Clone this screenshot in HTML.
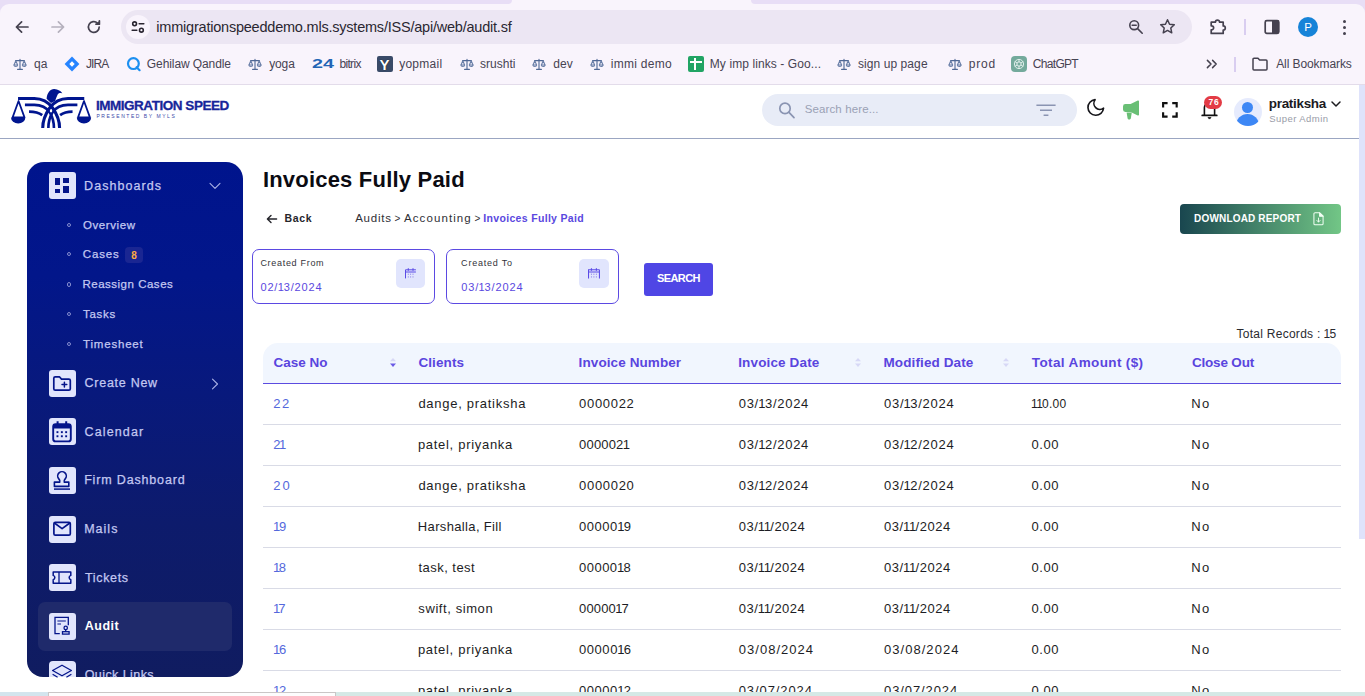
<!DOCTYPE html>
<html lang="en">
<head>
<meta charset="utf-8">
<title>Invoices Fully Paid - Immigration Speed</title>
<style>
*{box-sizing:border-box;margin:0;padding:0}
html,body{width:1365px;height:696px;overflow:hidden;background:#fff}
body{font-family:"Liberation Sans",sans-serif;position:relative}
#root{position:absolute;left:0;top:0;width:1365px;height:696px;overflow:hidden;background:#fff}
.a{position:absolute}
.t{position:absolute;white-space:pre;line-height:1;font-family:"Liberation Sans",sans-serif}
svg{position:absolute;overflow:visible}
.ib{position:absolute;left:49px;width:27px;height:27px;border-radius:3px;background:#e1e5fc}
.rowline{position:absolute;left:263px;width:1078px;height:1px;background:#d9dbe6}
.bul{position:absolute;left:66.8px;width:4.4px;height:4.4px;border:1px solid #858dcf;border-radius:50%}
</style>
</head>
<body>
<div id="root">
<!-- ============ browser chrome ============ -->
<div class="a" style="left:0;top:0;width:1365px;height:46px;background:#e8def6"></div>
<div class="a" style="left:0;top:4px;width:1365px;height:81px;background:#f9f4fc;border-radius:9px 9px 0 0"></div>
<div class="a" style="left:508px;top:0;width:247px;height:8px;background:#f9f4fc"></div>
<div class="a" style="left:500px;top:-4px;width:12px;height:8px;background:#e8def6;border-radius:0 0 4px 0"></div>
<div class="a" style="left:751px;top:-4px;width:12px;height:8px;background:#e8def6;border-radius:0 0 0 4px"></div>
<div class="a" style="left:0;top:84px;width:1365px;height:1px;background:#e3dcea"></div>
<!-- omnibox -->
<div class="a" style="left:121px;top:10px;width:1071px;height:34px;border-radius:17px;background:#ece6f3"></div>
<div class="a" style="left:126px;top:15px;width:24px;height:24px;border-radius:12px;background:#f9f4fc"></div>
<svg style="left:130px;top:19px" width="16" height="16" viewBox="0 0 16 16" fill="none" stroke="#2a2631" stroke-width="1.6" stroke-linecap="round"><circle cx="4.6" cy="4.8" r="1.9"/><path d="M9.2 4.8h4.6"/><circle cx="11.4" cy="11.2" r="1.9"/><path d="M2.2 11.2h4.6"/></svg>
<!-- nav arrows -->
<svg style="left:14px;top:19px" width="16" height="16" viewBox="0 0 16 16" fill="none" stroke="#45414f" stroke-width="1.7" stroke-linecap="round" stroke-linejoin="round"><path d="M14 8H2.6M7.6 2.8L2.4 8l5.2 5.2"/></svg>
<svg style="left:50px;top:19px" width="16" height="16" viewBox="0 0 16 16" fill="none" stroke="#b5b0bd" stroke-width="1.7" stroke-linecap="round" stroke-linejoin="round"><path d="M2 8h11.4M8.4 2.8L13.6 8l-5.2 5.2"/></svg>
<svg style="left:86px;top:19px" width="16" height="16" viewBox="0 0 16 16" fill="none" stroke="#45414f" stroke-width="1.7" stroke-linecap="round" stroke-linejoin="round"><path d="M13.2 8a5.4 5.4 0 1 1-1.7-3.9"/><path d="M13.4 1.8v3.4H10" fill="#45414f"/></svg>
<!-- zoom + star -->
<svg style="left:1128px;top:19px" width="16" height="16" viewBox="0 0 16 16" fill="none" stroke="#45414f" stroke-width="1.6" stroke-linecap="round"><circle cx="6.2" cy="6.2" r="4.4"/><path d="M9.6 9.6l4.6 4.6M4.2 6.2h4"/></svg>
<svg style="left:1159px;top:18px" width="17" height="17" viewBox="0 0 17 17" fill="none" stroke="#45414f" stroke-width="1.5" stroke-linejoin="round"><path d="M8.5 1.8l2.05 4.4 4.75.55-3.5 3.3.95 4.75L8.5 12.4l-4.25 2.4.95-4.75-3.5-3.3 4.75-.55z"/></svg>
<!-- extension puzzle -->
<svg style="left:1209px;top:17px" width="19" height="19" viewBox="0 0 19 19" fill="none" stroke="#45414f" stroke-width="1.7" stroke-linejoin="round"><path d="M2.2 5.2h4.2a2.1 2.1 0 1 1 4.2 0h3.6v3.7a2.1 2.1 0 1 1 0 4.2v3.3H2.2v-3.6a2 2 0 1 0 0-3.9z"/></svg>
<div class="a" style="left:1244px;top:19px;width:1.5px;height:16px;background:#d9cdf0"></div>
<!-- side panel -->
<svg style="left:1264px;top:19px" width="16" height="16" viewBox="0 0 16 16"><rect x="1.2" y="1.6" width="13.6" height="12.8" rx="1.6" fill="none" stroke="#45414f" stroke-width="1.7"/><rect x="8" y="1.6" width="6.8" height="12.8" fill="#45414f"/></svg>
<!-- profile -->
<div class="a" style="left:1298px;top:17px;width:20px;height:20px;border-radius:10px;background:#1683d8"></div>
<span class="t" style="left:1304.2px;top:21.8px;font-size:11.5px;color:#fff">P</span>
<div class="a" style="left:1343px;top:19.5px;width:3px;height:3px;border-radius:2px;background:#45414f"></div>
<div class="a" style="left:1343px;top:25.5px;width:3px;height:3px;border-radius:2px;background:#45414f"></div>
<div class="a" style="left:1343px;top:31.5px;width:3px;height:3px;border-radius:2px;background:#45414f"></div>
<!-- bookmark icons -->
<svg style="left:13px;top:57px" width="14" height="14" viewBox="0 0 14 14"><g fill="none" stroke="#6a7fa8" stroke-width="1.1" stroke-linecap="round"><path d="M7 2.2v9.6M4.6 12.4h4.8M2.6 3.6h8.8" stroke="#4f6794"/><path d="M2.8 3.8L1 8h3.6zM11.2 3.8L9.4 8H13z" stroke-linejoin="round"/><path d="M1 8a1.8 1.4 0 0 0 3.6 0M9.4 8a1.8 1.4 0 0 0 3.6 0"/></g></svg>
<svg style="left:248px;top:57px" width="14" height="14" viewBox="0 0 14 14"><g fill="none" stroke="#6a7fa8" stroke-width="1.1" stroke-linecap="round"><path d="M7 2.2v9.6M4.6 12.4h4.8M2.6 3.6h8.8" stroke="#4f6794"/><path d="M2.8 3.8L1 8h3.6zM11.2 3.8L9.4 8H13z" stroke-linejoin="round"/><path d="M1 8a1.8 1.4 0 0 0 3.6 0M9.4 8a1.8 1.4 0 0 0 3.6 0"/></g></svg>
<svg style="left:459.5px;top:57px" width="14" height="14" viewBox="0 0 14 14"><g fill="none" stroke="#6a7fa8" stroke-width="1.1" stroke-linecap="round"><path d="M7 2.2v9.6M4.6 12.4h4.8M2.6 3.6h8.8" stroke="#4f6794"/><path d="M2.8 3.8L1 8h3.6zM11.2 3.8L9.4 8H13z" stroke-linejoin="round"/><path d="M1 8a1.8 1.4 0 0 0 3.6 0M9.4 8a1.8 1.4 0 0 0 3.6 0"/></g></svg>
<svg style="left:532px;top:57px" width="14" height="14" viewBox="0 0 14 14"><g fill="none" stroke="#6a7fa8" stroke-width="1.1" stroke-linecap="round"><path d="M7 2.2v9.6M4.6 12.4h4.8M2.6 3.6h8.8" stroke="#4f6794"/><path d="M2.8 3.8L1 8h3.6zM11.2 3.8L9.4 8H13z" stroke-linejoin="round"/><path d="M1 8a1.8 1.4 0 0 0 3.6 0M9.4 8a1.8 1.4 0 0 0 3.6 0"/></g></svg>
<svg style="left:590px;top:57px" width="14" height="14" viewBox="0 0 14 14"><g fill="none" stroke="#6a7fa8" stroke-width="1.1" stroke-linecap="round"><path d="M7 2.2v9.6M4.6 12.4h4.8M2.6 3.6h8.8" stroke="#4f6794"/><path d="M2.8 3.8L1 8h3.6zM11.2 3.8L9.4 8H13z" stroke-linejoin="round"/><path d="M1 8a1.8 1.4 0 0 0 3.6 0M9.4 8a1.8 1.4 0 0 0 3.6 0"/></g></svg>
<svg style="left:837px;top:57px" width="14" height="14" viewBox="0 0 14 14"><g fill="none" stroke="#6a7fa8" stroke-width="1.1" stroke-linecap="round"><path d="M7 2.2v9.6M4.6 12.4h4.8M2.6 3.6h8.8" stroke="#4f6794"/><path d="M2.8 3.8L1 8h3.6zM11.2 3.8L9.4 8H13z" stroke-linejoin="round"/><path d="M1 8a1.8 1.4 0 0 0 3.6 0M9.4 8a1.8 1.4 0 0 0 3.6 0"/></g></svg>
<svg style="left:947.7px;top:57px" width="14" height="14" viewBox="0 0 14 14"><g fill="none" stroke="#6a7fa8" stroke-width="1.1" stroke-linecap="round"><path d="M7 2.2v9.6M4.6 12.4h4.8M2.6 3.6h8.8" stroke="#4f6794"/><path d="M2.8 3.8L1 8h3.6zM11.2 3.8L9.4 8H13z" stroke-linejoin="round"/><path d="M1 8a1.8 1.4 0 0 0 3.6 0M9.4 8a1.8 1.4 0 0 0 3.6 0"/></g></svg>
<!-- JIRA -->
<svg style="left:64px;top:56px" width="16" height="16" viewBox="0 0 16 16"><path d="M8 0.6L15.4 8 8 15.4 0.6 8z" fill="#2684ff"/><path d="M8 5.3L10.7 8 8 10.7 5.3 8z" fill="#fff"/></svg>
<!-- Q -->
<svg style="left:126px;top:56px" width="16" height="16" viewBox="0 0 16 16" fill="none" stroke="#1c8ff0" stroke-width="2.2" stroke-linecap="round"><circle cx="7.4" cy="7.6" r="5.4"/><path d="M10.6 11.2l3 3"/></svg>
<!-- yopmail Y -->
<div class="a" style="left:377px;top:56px;width:16px;height:16px;border-radius:2px;background:#394a68"></div>
<span class="t" style="left:379.4px;top:56.6px;font-size:15px;font-weight:700;color:#fff;text-shadow:0 0 1px #000">Y</span>
<!-- sheets -->
<div class="a" style="left:688px;top:56px;width:16px;height:16px;border-radius:2px;background:#21a464"></div>
<div class="a" style="left:694px;top:58px;width:2px;height:12px;background:#fff"></div>
<div class="a" style="left:690px;top:61px;width:12px;height:2px;background:#fff"></div>
<!-- chatgpt -->
<div class="a" style="left:1011px;top:56px;width:16px;height:16px;border-radius:4px;background:#74aa9c"></div>
<svg style="left:1013px;top:58px" width="12" height="12" viewBox="0 0 12 12" fill="none" stroke="#e8f3ef" stroke-width="0.9"><circle cx="6" cy="6" r="2.2"/><circle cx="6" cy="6" r="4.6"/><path d="M6 1.4v3M6 7.6v3M1.8 3.6l2.6 1.5M7.6 6.9l2.6 1.5M1.8 8.4l2.6-1.5M7.6 5.1l2.6-1.5"/></svg>
<!-- >> -->
<svg style="left:1206px;top:58px" width="12" height="12" viewBox="0 0 12 12" fill="none" stroke="#45414f" stroke-width="1.5" stroke-linecap="round" stroke-linejoin="round"><path d="M1.4 2.4L5 6 1.4 9.6M6.6 2.4L10.2 6 6.6 9.6"/></svg>
<div class="a" style="left:1234px;top:57px;width:1.5px;height:15px;background:#d9cdf0"></div>
<!-- folder -->
<svg style="left:1252px;top:57px" width="16" height="14" viewBox="0 0 16 14" fill="none" stroke="#45414f" stroke-width="1.5" stroke-linejoin="round"><path d="M1 2.2a1 1 0 0 1 1-1h4l1.6 1.8H14a1 1 0 0 1 1 1V12a1 1 0 0 1-1 1H2a1 1 0 0 1-1-1z"/></svg>
<!-- ============ page header ============ -->
<div class="a" style="left:0;top:85px;width:1359px;height:53px;background:#fff"></div>
<div class="a" style="left:0;top:138px;width:1359px;height:1px;background:#9ba6c2"></div>
<!-- scrollbar -->
<div class="a" style="left:1359px;top:85px;width:6px;height:454px;background:#dfe3fb"></div>
<!-- logo -->
<svg style="left:5px;top:86px" width="100" height="48" viewBox="0 0 1365 655">
<g fill="none" stroke="#00158f" stroke-width="42">
<path d="M178 170 L400 170 C520 170 600 230 650 300 C720 400 745 480 745 572"/>
<path d="M1082 170 L860 170 C740 170 660 230 610 300 C540 400 515 480 515 572"/>
<path d="M272 258 L400 258 C500 258 570 300 612 360 C652 430 668 500 668 572" stroke-width="36"/>
<path d="M988 258 L860 258 C760 258 690 300 648 360 C608 430 592 500 592 572" stroke-width="36"/>
<path d="M328 350 C400 350 460 362 508 398" stroke-width="38"/>
<path d="M922 350 C860 350 800 362 752 398" stroke-width="38"/>
<path d="M185 205 L104 428 L266 428 Z" stroke-width="24" stroke-linejoin="round"/>
<path d="M1078 205 L997 428 L1159 428 Z" stroke-width="24" stroke-linejoin="round"/>
</g>
<g fill="#00158f">
<path d="M568 175 C572 95 620 40 672 42 C722 46 768 72 782 102 C752 90 730 96 716 122 C702 150 694 178 684 205 L628 232 Z"/>
<path d="M82 430 A97 82 0 0 0 278 430 Z"/>
<path d="M980 430 A97 82 0 0 0 1176 430 Z"/>
</g>
<ellipse cx="628" cy="342" rx="16" ry="20" fill="#fff"/>
</svg>
<!-- search pill -->
<div class="a" style="left:762px;top:94px;width:315px;height:32px;border-radius:16px;background:#e8ecf7"></div>
<svg style="left:778px;top:101px" width="18" height="18" viewBox="0 0 18 18" fill="none" stroke="#8a94b2" stroke-width="1.7" stroke-linecap="round"><circle cx="7" cy="7.4" r="5.2"/><path d="M11 11.4l5 5.2"/></svg>
<svg style="left:1036px;top:104px" width="20" height="13" viewBox="0 0 20 13" fill="none" stroke="#8a94b2" stroke-width="1.5"><path d="M0.4 1.2h19.2M4 6.2h12M7.6 11.2h4.8"/></svg>
<!-- moon -->
<svg style="left:1087.300px;top:99.300px" width="17.500" height="17" viewBox="2.200 2.200 19.600 19.600" fill="none" stroke="#15151a" stroke-width="1.900" stroke-linejoin="round" stroke-linecap="round"><path d="M21 12.790A9 9 0 1 1 11.210 3 7 7 0 0 0 21 12.790z"/></svg>
<!-- megaphone -->
<svg style="left:1122px;top:100px" width="18" height="20" viewBox="0 0 18 20" fill="#69bf75"><path d="M15.8 0.6c.6-.3 1.2 0 1.2.7v13.4c0 .7-.6 1-1.2.7L8.6 12H3.4A2.4 2.4 0 0 1 1 9.600V6.4A2.400 2.400 0 0 1 3.400 4h5.200z"/><path d="M4.6 12.6h5.200l-1 6c-.1.500-.5.800-1 .8H6.600c-.5 0-.9-.3-1-.8z"/></svg>
<!-- fullscreen -->
<svg style="left:1161.500px;top:101.600px" width="15.800" height="15.800" viewBox="0 0 17 17" fill="none" stroke="#111" stroke-width="2.3"><path d="M1.200 6V1.200H6M11 1.200h4.800V6M15.800 11v4.800H11M6 15.800H1.200V11"/></svg>
<!-- bell -->
<svg style="left:1200.800px;top:99px" width="17" height="21" viewBox="0 0 17 21" fill="none" stroke="#111" stroke-width="1.600" stroke-linejoin="round"><path d="M3.400 16V8.600a5.100 5.100 0 0 1 10.200 0V16"/><path d="M1.200 16.400h14.600" stroke-width="1.700" stroke-linecap="round"/><path d="M7 18.600h3l-1.500 1.500z" fill="#111" stroke-width="0.800"/></svg>
<div class="a" style="left:1204.300px;top:95.500px;width:17.800px;height:13.500px;border-radius:7px;background:#e33b45"></div>
<!-- avatar -->
<div class="a" style="left:1233.500px;top:98px;width:28px;height:28px;border-radius:14px;background:#e6ebfd;overflow:hidden">
<div class="a" style="left:8.500px;top:3.500px;width:11px;height:11px;border-radius:6px;background:#3d87f5"></div>
<div class="a" style="left:2.500px;top:16px;width:23px;height:18px;border-radius:11.500px 11.500px 0 0;background:#3d87f5"></div>
</div>
<svg style="left:1331px;top:101px" width="10" height="6" viewBox="0 0 10 6" fill="none" stroke="#1b1b1f" stroke-width="1.500" stroke-linecap="round" stroke-linejoin="round"><path d="M1 1L5 5l4-4"/></svg>
<!-- ============ sidebar ============ -->
<div class="a" id="sb" style="left:27px;top:162px;width:216px;height:515px;border-radius:17px 17px 16px 16px;background:linear-gradient(180deg,#00148d 0%,#02168a 22%,#08197c 45%,#0d1b6c 70%,#101c60 100%);overflow:hidden">
<div class="a" style="left:11px;top:440px;width:194px;height:49px;border-radius:7px;background:#1f2a6b"></div>
</div>
<!-- icon boxes (page coords) -->
<div class="ib" style="top:172px"></div>
<div class="ib" style="top:370px"></div>
<div class="ib" style="top:418px"></div>
<div class="ib" style="top:467px"></div>
<div class="ib" style="top:516px"></div>
<div class="ib" style="top:564px"></div>
<div class="ib" style="top:613px"></div>
<div class="ib" style="top:661px;height:16px;border-radius:4px 4px 0 0"></div>
<!-- dashboards icon -->
<div class="a" style="left:54.600px;top:178.400px;width:5.800px;height:6.900px;background:#04148a"></div>
<div class="a" style="left:54.600px;top:188.700px;width:5.800px;height:4.100px;background:#04148a"></div>
<div class="a" style="left:63px;top:178.400px;width:6.100px;height:4.300px;background:#04148a"></div>
<div class="a" style="left:63px;top:186.100px;width:6.100px;height:6.700px;background:#04148a"></div>
<svg style="left:209px;top:182px" width="12" height="8" viewBox="0 0 12 8" fill="none" stroke="#aab1e6" stroke-width="1.100" stroke-linecap="round" stroke-linejoin="round"><path d="M1 1.400L6 6.400l5-5"/></svg>
<!-- bullets -->
<div class="bul" style="top:222.600px"></div>
<div class="bul" style="top:251.800px"></div>
<div class="bul" style="top:282.400px"></div>
<div class="bul" style="top:311.700px"></div>
<div class="bul" style="top:341.700px"></div>
<div class="a" style="left:125px;top:247px;width:18px;height:16px;border-radius:4px;background:#1a2692"></div>
<!-- create new: folder plus -->
<svg style="left:49px;top:370px" width="27" height="27" viewBox="0 0 27 27" fill="none" stroke="#04148a" stroke-width="1.700" stroke-linejoin="round" stroke-linecap="round"><path d="M4.800 8.200a1.400 1.400 0 0 1 1.400-1.400h4.200l2.100 2.300h7.400a1.400 1.400 0 0 1 1.400 1.400v8.200a1.400 1.400 0 0 1-1.400 1.400H6.200a1.400 1.400 0 0 1-1.400-1.400z"/><path d="M15.400 12.200v4.800M13 14.600h4.800" stroke-width="1.500"/></svg>
<svg style="left:211px;top:377.500px" width="8" height="12" viewBox="0 0 8 12" fill="none" stroke="#aab1e6" stroke-width="1.100" stroke-linecap="round" stroke-linejoin="round"><path d="M1.500 1.200L6.500 6l-5 4.800"/></svg>
<!-- calendar -->
<svg style="left:49px;top:418px" width="27" height="27" viewBox="0 0 27 27"><rect x="4.200" y="6.100" width="17.600" height="17.300" rx="2.400" fill="none" stroke="#04148a" stroke-width="1.900"/><path d="M4.200 6.100h17.600v4.300H4.200zM7.600 3.200h2v3h-2zM16.200 3.200h2v3h-2z" fill="#04148a"/><g fill="#04148a"><rect x="7.500" y="13.200" width="1.900" height="1.900"/><rect x="11.900" y="13.200" width="1.900" height="1.900"/><rect x="16.200" y="13.200" width="1.900" height="1.900"/><rect x="7.500" y="17.300" width="1.900" height="1.900"/><rect x="11.900" y="17.300" width="1.900" height="1.900"/><rect x="16.200" y="17.300" width="1.900" height="1.900"/></g></svg>
<!-- stamp -->
<svg style="left:49px;top:467px" width="27" height="27" viewBox="0 0 27 27" fill="none" stroke="#04148a" stroke-width="1.600" stroke-linejoin="round"><path d="M10.800 15.100c.6-1.200-.1-2.200-1-3.200a4.300 4.300 0 1 1 6.400 0c-.9 1-1.600 2-1 3.200h4.600v4.300H5.400v-4.300z"/><path d="M5 22.100h16" stroke-width="1.500"/></svg>
<!-- mail -->
<svg style="left:49px;top:516px" width="27" height="27" viewBox="0 0 27 27" fill="none" stroke="#04148a" stroke-width="1.700" stroke-linejoin="round"><rect x="4.900" y="6.300" width="16.400" height="12.800" rx="1.400"/><path d="M5.400 7l7.700 5.600L20.800 7"/></svg>
<!-- ticket -->
<svg style="left:49px;top:564px" width="27" height="27" viewBox="0 0 27 27" fill="none" stroke="#04148a" stroke-width="1.500" stroke-linejoin="round"><path d="M4.200 8h17.600v3.400a2.300 2.300 0 0 0 0 4.400v3.400H4.200v-3.400a2.300 2.300 0 0 0 0-4.400z"/><path d="M10 8v11.200" stroke-width="1.300"/></svg>
<!-- audit -->
<svg style="left:49px;top:613px" width="27" height="27" viewBox="0 0 27 27" fill="none" stroke="#04148a" stroke-width="1.300"><path d="M10.800 20.700H6V4.300h13.300v7.900"/><path d="M8.400 8h8.400M8.400 11h3.600" stroke-width="1.200"/><circle cx="16.700" cy="14.900" r="1.700"/><path d="M16.700 16.600v2"/><rect x="13.500" y="18.700" width="6.600" height="2.400"/></svg>
<!-- quick links: layers -->
<svg style="left:49px;top:661px" width="27" height="16" viewBox="0 0 27 16" fill="none" stroke="#04148a" stroke-width="1.300" stroke-linejoin="round"><path d="M13 4.200l9.400 5.300L13 14.800 3.600 9.500z"/><path d="M3.600 13.300l5 2.900M22.400 13.300l-5 2.900"/></svg>
<!-- ============ main ============ -->
<svg style="left:266px;top:213.500px" width="12" height="10" viewBox="0 0 12 10" fill="none" stroke="#25252b" stroke-width="1.400" stroke-linecap="round" stroke-linejoin="round"><path d="M10.600 5H1.600M5 1.400L1.400 5 5 8.600"/></svg>
<!-- download button -->
<div class="a" style="left:1180px;top:204px;width:161px;height:30px;border-radius:4px;background:linear-gradient(90deg,#19464f 0%,#72c686 100%)"></div>
<svg style="left:1312.800px;top:212px" width="11" height="13.750" viewBox="0 0 12 15" fill="none" stroke="#f2fff4" stroke-width="1.100" stroke-linejoin="round" stroke-linecap="round"><path d="M2.200 0.800h5l3.800 3.800v8.200a1.200 1.200 0 0 1-1.200 1.200H2.200A1.200 1.200 0 0 1 1 12.800V2a1.200 1.200 0 0 1 1.200-1.200z"/><path d="M7.200 0.800v3.800H11z" fill="#f2fff4"/><path d="M6 6.600v4.200M4.200 9.200L6 11l1.800-1.800" stroke-width="1"/></svg>
<!-- date boxes -->
<div class="a" style="left:252px;top:249px;width:183px;height:55px;border:1.200px solid #5b49e2;border-radius:7px;background:#fff"></div>
<div class="a" style="left:446px;top:249px;width:173px;height:55px;border:1.200px solid #5b49e2;border-radius:7px;background:#fff"></div>
<div class="a" style="left:396px;top:259px;width:29px;height:29px;border-radius:5px;background:#e1e5fd"></div>
<div class="a" style="left:579px;top:259px;width:30px;height:29px;border-radius:5px;background:#e1e5fd"></div>
<svg style="left:405px;top:268px" width="12" height="11" viewBox="0 0 12 11"><g fill="none" stroke="#5b4be6" stroke-width="1"><path d="M0.500 10.400V1.800h10.400M0.500 4h10.400" /><path d="M3.300 0.300v2.400M8 0.300v2.400" stroke-width="1.100"/><path d="M3.300 5.600v1.400M5.600 5.600v1.400M8 5.600v1.400M3.300 8.200v1.400M5.600 8.200v1.400M8 8.200v1.400" stroke-width="0.800" stroke="#8f86ea"/></g></svg>
<svg style="left:587.800px;top:268px" width="12.600" height="11" viewBox="0 0 12 11" preserveAspectRatio="none"><g fill="none" stroke="#5b4be6" stroke-width="1"><path d="M0.500 10.400V1.800h10.400M0.500 4h10.400" /><path d="M3.300 0.300v2.400M8 0.300v2.400" stroke-width="1.100"/><path d="M3.300 5.600v1.400M5.600 5.600v1.400M8 5.600v1.400M3.300 8.200v1.400M5.600 8.200v1.400M8 8.200v1.400" stroke-width="0.800" stroke="#8f86ea"/></g><path d="M10.900 1.800v8.600" fill="none" stroke="#5b4be6" stroke-width="1"/></svg>
<!-- search button -->
<div class="a" style="left:644px;top:263px;width:69px;height:33px;border-radius:3px;background:#4f46e5"></div>
<!-- table -->
<div class="a" style="left:263px;top:343px;width:1078px;height:40px;border-radius:15px 15px 0 0;background:#f1f6fe"></div>
<div class="a" style="left:263px;top:382.500px;width:1078px;height:1.500px;background:#5b4be0"></div>
<svg style="left:389.500px;top:358px" width="6" height="9" viewBox="0 0 6 9" fill="#6a5ae6"><g><path d="M3 0L6 3.200H0z" fill="#d7d8f6"/><path d="M0 5.400h6L3 9z"/></g></svg>
<svg style="left:854.500px;top:358px" width="6" height="9" viewBox="0 0 6 9" fill="#d7d8f6"><g><path d="M3 0L6 3.200H0z" fill="#d7d8f6"/><path d="M0 5.400h6L3 9z"/></g></svg>
<svg style="left:1002.500px;top:358px" width="6" height="9" viewBox="0 0 6 9" fill="#d7d8f6"><g><path d="M3 0L6 3.200H0z" fill="#d7d8f6"/><path d="M0 5.400h6L3 9z"/></g></svg>
<div class="rowline" style="top:424px"></div>
<div class="rowline" style="top:465px"></div>
<div class="rowline" style="top:506px"></div>
<div class="rowline" style="top:547px"></div>
<div class="rowline" style="top:588px"></div>
<div class="rowline" style="top:629px"></div>
<div class="rowline" style="top:670px"></div>
<!-- taskbar sliver -->
<div class="a" style="left:0;top:692px;width:1365px;height:4px;background:#d5e9e6;z-index:50"></div>
<div class="a" style="left:0;top:692px;width:48px;height:4px;background:#d3e5ee;z-index:51"></div>
<div class="a" style="left:48px;top:692px;width:288px;height:4px;background:#fdfdfd;border-top:1px solid #c9c6c6;border-left:1px solid #c9c6c6;border-right:1px solid #c9c6c6;z-index:52"></div>

<!-- text -->
<span class="t" style="left:156.35px;top:20px;font-size:14.5px;font-weight:400;color:#2a2631;letter-spacing:-0.217px;">immigrationspeeddemo.mls.systems/ISS/api/web/audit.sf</span>
<span class="t" style="left:33.92px;top:58px;font-size:12px;font-weight:400;color:#474352;letter-spacing:0.231px;">qa</span>
<span class="t" style="left:86.03px;top:58px;font-size:12px;font-weight:400;color:#474352;letter-spacing:-0.900px;">JIRA</span>
<span class="t" style="left:146.84px;top:58px;font-size:12px;font-weight:400;color:#474352;letter-spacing:-0.092px;">Gehilaw Qandle</span>
<span class="t" style="left:269.18px;top:58px;font-size:12px;font-weight:400;color:#474352;letter-spacing:-0.131px;">yoga</span>
<span class="t" style="left:339.40px;top:58px;font-size:12px;font-weight:400;color:#474352;letter-spacing:-0.649px;">bitrix</span>
<span class="t" style="left:399.18px;top:58px;font-size:12px;font-weight:400;color:#474352;letter-spacing:0.262px;">yopmail</span>
<span class="t" style="left:480.09px;top:58px;font-size:12px;font-weight:400;color:#474352;letter-spacing:0.010px;">srushti</span>
<span class="t" style="left:553.32px;top:58px;font-size:12px;font-weight:400;color:#474352;letter-spacing:0.002px;">dev</span>
<span class="t" style="left:610.76px;top:58px;font-size:12px;font-weight:400;color:#474352;letter-spacing:0.283px;">immi demo</span>
<span class="t" style="left:709.78px;top:58px;font-size:12px;font-weight:400;color:#474352;letter-spacing:0.094px;">My imp links - Goo...</span>
<span class="t" style="left:857.89px;top:58px;font-size:12px;font-weight:400;color:#474352;letter-spacing:0.087px;">sign up page</span>
<span class="t" style="left:968.80px;top:58px;font-size:12px;font-weight:400;color:#474352;letter-spacing:0.748px;">prod</span>
<span class="t" style="left:1032.84px;top:58px;font-size:12px;font-weight:400;color:#474352;letter-spacing:-0.695px;">ChatGPT</span>
<span class="t" style="left:1276.18px;top:58px;font-size:12px;font-weight:400;color:#474352;letter-spacing:-0.086px;">All Bookmarks</span>
<span class="t" style="left:311.77px;top:57px;font-size:13.5px;font-weight:700;color:#2265b5;letter-spacing:0.000px;transform:scaleX(1.460);transform-origin:0 0">24</span>
<span class="t" style="left:95.91px;top:99px;font-size:13.5px;font-weight:700;color:#17259a;letter-spacing:-0.463px;-webkit-text-stroke:0.3px #17259a">IMMIGRATION SPEED</span>
<span class="t" style="left:96.46px;top:114px;font-size:5px;font-weight:400;color:#3a48a8;letter-spacing:1.547px;">PRESENTED BY MYLS</span>
<span class="t" style="left:804.76px;top:104px;font-size:11.5px;font-weight:400;color:#9aa1b5;letter-spacing:0.114px;">Search here...</span>
<span class="t" style="left:1268.81px;top:97px;font-size:13.5px;font-weight:700;color:#1b1b1f;letter-spacing:-0.318px;">pratiksha</span>
<span class="t" style="left:1269.14px;top:114px;font-size:9.5px;font-weight:400;color:#999ca8;letter-spacing:0.454px;">Super Admin</span>
<span class="t" style="left:1208.59px;top:98px;font-size:8.5px;font-weight:700;color:#fff;letter-spacing:0.661px;">76</span>
<span class="t" style="left:84.04px;top:180px;font-size:12.5px;font-weight:400;color:#c3c8f1;letter-spacing:1.069px;-webkit-text-stroke:0.25px #c3c8f1">Dashboards</span>
<span class="t" style="left:82.89px;top:220px;font-size:11.5px;font-weight:400;color:#c3c8f1;letter-spacing:0.606px;-webkit-text-stroke:0.25px #c3c8f1">Overview</span>
<span class="t" style="left:82.87px;top:249px;font-size:11.5px;font-weight:400;color:#c3c8f1;letter-spacing:0.825px;-webkit-text-stroke:0.25px #c3c8f1">Cases</span>
<span class="t" style="left:82.41px;top:279px;font-size:11.5px;font-weight:400;color:#c3c8f1;letter-spacing:0.511px;-webkit-text-stroke:0.25px #c3c8f1">Reassign Cases</span>
<span class="t" style="left:83.01px;top:309px;font-size:11.5px;font-weight:400;color:#c3c8f1;letter-spacing:0.715px;-webkit-text-stroke:0.25px #c3c8f1">Tasks</span>
<span class="t" style="left:83.01px;top:339px;font-size:11.5px;font-weight:400;color:#c3c8f1;letter-spacing:0.813px;-webkit-text-stroke:0.25px #c3c8f1">Timesheet</span>
<span class="t" style="left:131.29px;top:251px;font-size:10px;font-weight:700;color:#ffad42;letter-spacing:0.000px;">8</span>
<span class="t" style="left:84.62px;top:377px;font-size:12.5px;font-weight:400;color:#c3c8f1;letter-spacing:0.723px;-webkit-text-stroke:0.25px #c3c8f1">Create New</span>
<span class="t" style="left:84.62px;top:426px;font-size:12.5px;font-weight:400;color:#c3c8f1;letter-spacing:1.109px;-webkit-text-stroke:0.25px #c3c8f1">Calendar</span>
<span class="t" style="left:84.14px;top:474px;font-size:12.5px;font-weight:400;color:#c3c8f1;letter-spacing:0.840px;-webkit-text-stroke:0.25px #c3c8f1">Firm Dashboard</span>
<span class="t" style="left:84.14px;top:523px;font-size:12.5px;font-weight:400;color:#c3c8f1;letter-spacing:1.031px;-webkit-text-stroke:0.25px #c3c8f1">Mails</span>
<span class="t" style="left:84.95px;top:572px;font-size:12.5px;font-weight:400;color:#c3c8f1;letter-spacing:0.669px;-webkit-text-stroke:0.25px #c3c8f1">Tickets</span>
<span class="t" style="left:84.77px;top:620px;font-size:12.5px;font-weight:700;color:#ffffff;letter-spacing:0.495px;">Audit</span>
<span class="t" style="left:84.67px;top:669px;font-size:12.5px;font-weight:400;color:#c3c8f1;letter-spacing:0.430px;-webkit-text-stroke:0.25px #c3c8f1;clip-path:inset(0 0 4.2px 0)">Quick Links</span>
<span class="t" style="left:262.90px;top:169px;font-size:22px;font-weight:700;color:#0b0b12;letter-spacing:0.203px;">Invoices Fully Paid</span>
<span class="t" style="left:284.39px;top:213px;font-size:10.5px;font-weight:700;color:#25252b;letter-spacing:0.734px;">Back</span>
<span class="t" style="left:355.18px;top:213px;font-size:11.5px;font-weight:400;color:#2f2f36;letter-spacing:0.751px;">Audits</span>
<span class="t" style="left:394.40px;top:214px;font-size:10px;font-weight:400;color:#2f2f36;letter-spacing:0.000px;">&gt;</span>
<span class="t" style="left:403.98px;top:213px;font-size:11.5px;font-weight:400;color:#2f2f36;letter-spacing:1.096px;">Accounting</span>
<span class="t" style="left:474.40px;top:214px;font-size:10px;font-weight:400;color:#2f2f36;letter-spacing:0.000px;">&gt;</span>
<span class="t" style="left:483.29px;top:213px;font-size:10.5px;font-weight:700;color:#5a48e0;letter-spacing:0.326px;">Invoices Fully Paid</span>
<span class="t" style="left:1194.12px;top:214px;font-size:10px;font-weight:700;color:#ffffff;letter-spacing:0.166px;">DOWNLOAD REPORT</span>
<span class="t" style="left:260.42px;top:259px;font-size:9px;font-weight:400;color:#33333a;letter-spacing:0.697px;">Created From</span>
<span class="t" style="left:260.46px;top:282px;font-size:11px;font-weight:400;color:#5a48e0;letter-spacing:0.838px;">02/<span style="margin:0 -0.99px 0 -0.55px">1</span>3/2024</span>
<span class="t" style="left:461.12px;top:259px;font-size:9px;font-weight:400;color:#33333a;letter-spacing:0.776px;">Created To</span>
<span class="t" style="left:461.16px;top:282px;font-size:11px;font-weight:400;color:#5a48e0;letter-spacing:0.883px;">03/<span style="margin:0 -0.99px 0 -0.55px">1</span>3/2024</span>
<span class="t" style="left:656.97px;top:273px;font-size:11px;font-weight:700;color:#ffffff;letter-spacing:-0.584px;">SEARCH</span>
<span class="t" style="left:1236.47px;top:328px;font-size:12px;font-weight:400;color:#2a2a30;letter-spacing:0.270px;">Total Records : <span style="margin:0 -1.08px 0 -0.60px">1</span>5</span>
<span class="t" style="left:273.40px;top:356px;font-size:13.5px;font-weight:700;color:#5a45de;letter-spacing:0.010px;">Case No</span>
<span class="t" style="left:418.40px;top:356px;font-size:13.5px;font-weight:700;color:#5a45de;letter-spacing:0.108px;">Clients</span>
<span class="t" style="left:578.61px;top:356px;font-size:13.5px;font-weight:700;color:#5a45de;letter-spacing:0.095px;">Invoice Number</span>
<span class="t" style="left:738.21px;top:356px;font-size:13.5px;font-weight:700;color:#5a45de;letter-spacing:0.144px;">Invoice Date</span>
<span class="t" style="left:883.51px;top:356px;font-size:13.5px;font-weight:700;color:#5a45de;letter-spacing:0.107px;">Modified Date</span>
<span class="t" style="left:1031.85px;top:356px;font-size:13.5px;font-weight:700;color:#5a45de;letter-spacing:0.368px;">Total Amount ($)</span>
<span class="t" style="left:1191.90px;top:356px;font-size:13.5px;font-weight:700;color:#5a45de;letter-spacing:-0.173px;">Close Out</span>
<span class="t" style="left:273.32px;top:397px;font-size:13px;font-weight:400;color:#5468dc;letter-spacing:1.343px;">22</span>
<span class="t" style="left:418.39px;top:397px;font-size:13px;font-weight:400;color:#1d1d24;letter-spacing:0.724px;">dange, pratiksha</span>
<span class="t" style="left:579.12px;top:397px;font-size:13px;font-weight:400;color:#1d1d24;letter-spacing:0.687px;">0000022</span>
<span class="t" style="left:738.72px;top:397px;font-size:13px;font-weight:400;color:#1d1d24;letter-spacing:0.705px;">03/<span style="margin:0 -1.17px 0 -0.65px">1</span>3/2024</span>
<span class="t" style="left:884.02px;top:397px;font-size:13px;font-weight:400;color:#1d1d24;letter-spacing:0.705px;">03/<span style="margin:0 -1.17px 0 -0.65px">1</span>3/2024</span>
<span class="t" style="left:1031.63px;top:398px;font-size:12px;font-weight:400;color:#1d1d24;letter-spacing:0.218px;"><span style="margin:0 -1.08px 0 -0.60px">1</span><span style="margin:0 -1.08px 0 -0.60px">1</span>0.00</span>
<span class="t" style="left:1191.32px;top:397px;font-size:13px;font-weight:400;color:#1d1d24;letter-spacing:1.190px;">No</span>
<span class="t" style="left:273.32px;top:438px;font-size:13px;font-weight:400;color:#5468dc;letter-spacing:-0.900px;">2<span style="margin:0 -1.17px 0 -0.65px">1</span></span>
<span class="t" style="left:417.91px;top:438px;font-size:13px;font-weight:400;color:#1d1d24;letter-spacing:0.701px;">patel, priyanka</span>
<span class="t" style="left:579.12px;top:438px;font-size:13px;font-weight:400;color:#1d1d24;letter-spacing:0.156px;">000002<span style="margin:0 -1.17px 0 -0.65px">1</span></span>
<span class="t" style="left:738.72px;top:438px;font-size:13px;font-weight:400;color:#1d1d24;letter-spacing:0.705px;">03/<span style="margin:0 -1.17px 0 -0.65px">1</span>2/2024</span>
<span class="t" style="left:884.02px;top:438px;font-size:13px;font-weight:400;color:#1d1d24;letter-spacing:0.705px;">03/<span style="margin:0 -1.17px 0 -0.65px">1</span>2/2024</span>
<span class="t" style="left:1031.52px;top:438px;font-size:13px;font-weight:400;color:#1d1d24;letter-spacing:0.590px;">0.00</span>
<span class="t" style="left:1191.32px;top:438px;font-size:13px;font-weight:400;color:#1d1d24;letter-spacing:1.190px;">No</span>
<span class="t" style="left:273.32px;top:479px;font-size:13px;font-weight:400;color:#5468dc;letter-spacing:1.871px;">20</span>
<span class="t" style="left:418.39px;top:479px;font-size:13px;font-weight:400;color:#1d1d24;letter-spacing:0.724px;">dange, pratiksha</span>
<span class="t" style="left:579.12px;top:479px;font-size:13px;font-weight:400;color:#1d1d24;letter-spacing:0.676px;">0000020</span>
<span class="t" style="left:738.72px;top:479px;font-size:13px;font-weight:400;color:#1d1d24;letter-spacing:0.705px;">03/<span style="margin:0 -1.17px 0 -0.65px">1</span>2/2024</span>
<span class="t" style="left:884.02px;top:479px;font-size:13px;font-weight:400;color:#1d1d24;letter-spacing:0.705px;">03/<span style="margin:0 -1.17px 0 -0.65px">1</span>2/2024</span>
<span class="t" style="left:1031.52px;top:479px;font-size:13px;font-weight:400;color:#1d1d24;letter-spacing:0.590px;">0.00</span>
<span class="t" style="left:1191.32px;top:479px;font-size:13px;font-weight:400;color:#1d1d24;letter-spacing:1.190px;">No</span>
<span class="t" style="left:273.70px;top:520px;font-size:13px;font-weight:400;color:#5468dc;letter-spacing:-0.131px;"><span style="margin:0 -1.17px 0 -0.65px">1</span>9</span>
<span class="t" style="left:417.82px;top:520px;font-size:13px;font-weight:400;color:#1d1d24;letter-spacing:0.352px;">Harshalla, Fill</span>
<span class="t" style="left:579.12px;top:520px;font-size:13px;font-weight:400;color:#1d1d24;letter-spacing:0.508px;">00000<span style="margin:0 -1.17px 0 -0.65px">1</span>9</span>
<span class="t" style="left:738.72px;top:520px;font-size:13px;font-weight:400;color:#1d1d24;letter-spacing:0.515px;">03/<span style="margin:0 -1.17px 0 -0.65px">1</span><span style="margin:0 -1.17px 0 -0.65px">1</span>/2024</span>
<span class="t" style="left:884.02px;top:520px;font-size:13px;font-weight:400;color:#1d1d24;letter-spacing:0.515px;">03/<span style="margin:0 -1.17px 0 -0.65px">1</span><span style="margin:0 -1.17px 0 -0.65px">1</span>/2024</span>
<span class="t" style="left:1031.52px;top:520px;font-size:13px;font-weight:400;color:#1d1d24;letter-spacing:0.590px;">0.00</span>
<span class="t" style="left:1191.32px;top:520px;font-size:13px;font-weight:400;color:#1d1d24;letter-spacing:1.190px;">No</span>
<span class="t" style="left:273.70px;top:561px;font-size:13px;font-weight:400;color:#5468dc;letter-spacing:-0.457px;"><span style="margin:0 -1.17px 0 -0.65px">1</span>8</span>
<span class="t" style="left:418.56px;top:561px;font-size:13px;font-weight:400;color:#1d1d24;letter-spacing:0.455px;">task, test</span>
<span class="t" style="left:579.12px;top:561px;font-size:13px;font-weight:400;color:#1d1d24;letter-spacing:0.454px;">00000<span style="margin:0 -1.17px 0 -0.65px">1</span>8</span>
<span class="t" style="left:738.72px;top:561px;font-size:13px;font-weight:400;color:#1d1d24;letter-spacing:0.515px;">03/<span style="margin:0 -1.17px 0 -0.65px">1</span><span style="margin:0 -1.17px 0 -0.65px">1</span>/2024</span>
<span class="t" style="left:884.02px;top:561px;font-size:13px;font-weight:400;color:#1d1d24;letter-spacing:0.515px;">03/<span style="margin:0 -1.17px 0 -0.65px">1</span><span style="margin:0 -1.17px 0 -0.65px">1</span>/2024</span>
<span class="t" style="left:1031.52px;top:561px;font-size:13px;font-weight:400;color:#1d1d24;letter-spacing:0.590px;">0.00</span>
<span class="t" style="left:1191.32px;top:561px;font-size:13px;font-weight:400;color:#1d1d24;letter-spacing:1.190px;">No</span>
<span class="t" style="left:273.70px;top:602px;font-size:13px;font-weight:400;color:#5468dc;letter-spacing:-0.900px;"><span style="margin:0 -1.17px 0 -0.65px">1</span>7</span>
<span class="t" style="left:418.37px;top:602px;font-size:13px;font-weight:400;color:#1d1d24;letter-spacing:0.578px;">swift, simon</span>
<span class="t" style="left:579.12px;top:602px;font-size:13px;font-weight:400;color:#1d1d24;letter-spacing:0.137px;">00000<span style="margin:0 -1.17px 0 -0.65px">1</span>7</span>
<span class="t" style="left:738.72px;top:602px;font-size:13px;font-weight:400;color:#1d1d24;letter-spacing:0.515px;">03/<span style="margin:0 -1.17px 0 -0.65px">1</span><span style="margin:0 -1.17px 0 -0.65px">1</span>/2024</span>
<span class="t" style="left:884.02px;top:602px;font-size:13px;font-weight:400;color:#1d1d24;letter-spacing:0.515px;">03/<span style="margin:0 -1.17px 0 -0.65px">1</span><span style="margin:0 -1.17px 0 -0.65px">1</span>/2024</span>
<span class="t" style="left:1031.52px;top:602px;font-size:13px;font-weight:400;color:#1d1d24;letter-spacing:0.590px;">0.00</span>
<span class="t" style="left:1191.32px;top:602px;font-size:13px;font-weight:400;color:#1d1d24;letter-spacing:1.190px;">No</span>
<span class="t" style="left:273.70px;top:643px;font-size:13px;font-weight:400;color:#5468dc;letter-spacing:-0.029px;"><span style="margin:0 -1.17px 0 -0.65px">1</span>6</span>
<span class="t" style="left:417.91px;top:643px;font-size:13px;font-weight:400;color:#1d1d24;letter-spacing:0.701px;">patel, priyanka</span>
<span class="t" style="left:579.12px;top:643px;font-size:13px;font-weight:400;color:#1d1d24;letter-spacing:0.525px;">00000<span style="margin:0 -1.17px 0 -0.65px">1</span>6</span>
<span class="t" style="left:738.72px;top:643px;font-size:13px;font-weight:400;color:#1d1d24;letter-spacing:1.035px;">03/08/2024</span>
<span class="t" style="left:884.02px;top:643px;font-size:13px;font-weight:400;color:#1d1d24;letter-spacing:1.035px;">03/08/2024</span>
<span class="t" style="left:1031.52px;top:643px;font-size:13px;font-weight:400;color:#1d1d24;letter-spacing:0.590px;">0.00</span>
<span class="t" style="left:1191.32px;top:643px;font-size:13px;font-weight:400;color:#1d1d24;letter-spacing:1.190px;">No</span>
<span class="t" style="left:273.70px;top:684px;font-size:13px;font-weight:400;color:#5468dc;letter-spacing:-0.159px;"><span style="margin:0 -1.17px 0 -0.65px">1</span>2</span>
<span class="t" style="left:417.91px;top:684px;font-size:13px;font-weight:400;color:#1d1d24;letter-spacing:0.701px;">patel, priyanka</span>
<span class="t" style="left:579.12px;top:684px;font-size:13px;font-weight:400;color:#1d1d24;letter-spacing:0.504px;">00000<span style="margin:0 -1.17px 0 -0.65px">1</span>2</span>
<span class="t" style="left:738.72px;top:684px;font-size:13px;font-weight:400;color:#1d1d24;letter-spacing:0.902px;">03/07/2024</span>
<span class="t" style="left:884.02px;top:684px;font-size:13px;font-weight:400;color:#1d1d24;letter-spacing:0.902px;">03/07/2024</span>
<span class="t" style="left:1031.52px;top:684px;font-size:13px;font-weight:400;color:#1d1d24;letter-spacing:0.590px;">0.00</span>
<span class="t" style="left:1191.32px;top:684px;font-size:13px;font-weight:400;color:#1d1d24;letter-spacing:1.190px;">No</span>
</div>
</body>
</html>
